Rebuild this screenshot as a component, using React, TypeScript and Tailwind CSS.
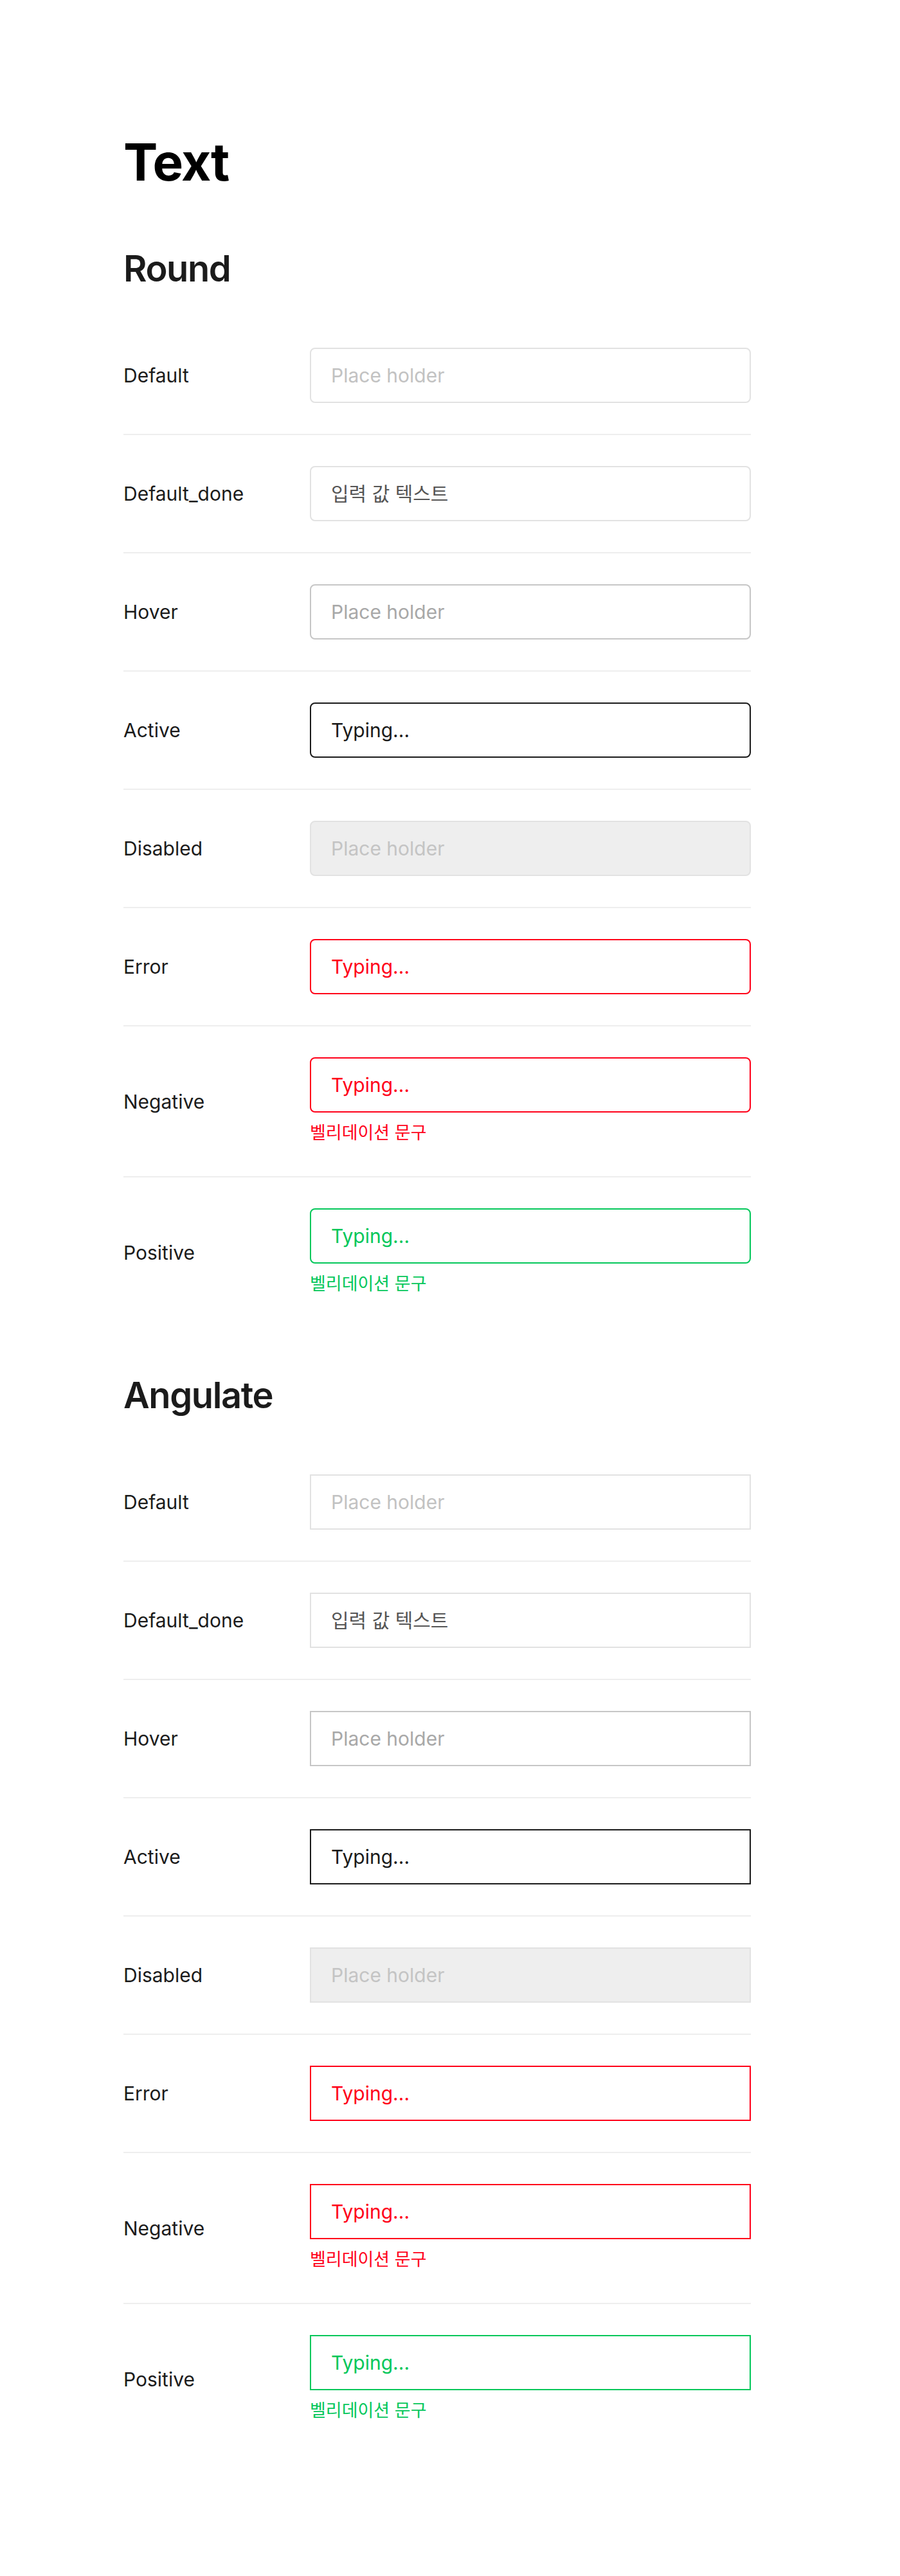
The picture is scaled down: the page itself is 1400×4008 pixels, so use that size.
const FONT = "font-['Inter','Noto_Sans_CJK_KR',sans-serif]"

type Variant =
  | 'default'
  | 'done'
  | 'hover'
  | 'active'
  | 'disabled'
  | 'error'
  | 'negative'
  | 'positive'

const ROWS: { label: string; variant: Variant }[] = [
  { label: 'Default', variant: 'default' },
  { label: 'Default_done', variant: 'done' },
  { label: 'Hover', variant: 'hover' },
  { label: 'Active', variant: 'active' },
  { label: 'Disabled', variant: 'disabled' },
  { label: 'Error', variant: 'error' },
  { label: 'Negative', variant: 'negative' },
  { label: 'Positive', variant: 'positive' },
]

const BOX: Record<Variant, string> = {
  default: 'border-[#e2e2e2] bg-white text-[#c2c2c2]',
  done: 'border-[#e2e2e2] bg-white text-[#555555]',
  hover: 'border-[#c6c6c6] bg-white text-[#a8a8a8]',
  active: 'border-[#1a1a1a] bg-white text-[#1a1a1a]',
  disabled: 'border-[#e2e2e2] bg-[#eeeeee] text-[#c4c4c4]',
  error: 'border-[#ff0019] bg-white text-[#ff0019]',
  negative: 'border-[#ff0019] bg-white text-[#ff0019]',
  positive: 'border-[#03c75a] bg-white text-[#03c75a]',
}

const TEXT: Record<Variant, string> = {
  default: 'Place holder',
  done: '입력 값 텍스트',
  hover: 'Place holder',
  active: 'Typing...',
  disabled: 'Place holder',
  error: 'Typing...',
  negative: 'Typing...',
  positive: 'Typing...',
}

function Field({ variant, round }: { variant: Variant; round: boolean }) {
  const hint =
    variant === 'negative'
      ? 'text-[#ff0019]'
      : variant === 'positive'
        ? 'text-[#03c75a]'
        : null

  return (
    <div className="flex-1">
      <div
        className={`flex h-[86px] items-center border-2 pl-[31px] text-[30px] leading-none ${
          round ? 'rounded-lg' : ''
        } ${BOX[variant]}`}
      >
        {TEXT[variant]}
      </div>
      {hint && (
        <p className={`mt-3 text-[27px] leading-[39px] ${hint}`}>
          벨리데이션 문구
        </p>
      )}
    </div>
  )
}

function Section({ title, round }: { title: string; round: boolean }) {
  return (
    <section>
      <h2 className="text-[56px] font-semibold leading-none tracking-[-0.025em] text-[#1b1b1b]">
        {title}
      </h2>

      <div className="mt-[47px]">
        {ROWS.map((row) => (
          <div
            key={row.label}
            className="flex items-center border-b-2 border-[#eeeeee] py-12 last:border-b-0"
          >
            <span className="w-[290px] shrink-0 text-[30px] leading-none text-[#1b1b1b]">
              {row.label}
            </span>
            <Field variant={row.variant} round={round} />
          </div>
        ))}
      </div>
    </section>
  )
}

export default function App() {
  return (
    <div className={`min-h-screen bg-white pt-[212px] pb-[194px] pl-[192px] ${FONT}`}>
      <div className="w-[976px]">
        <h1 className="text-[80px] font-bold leading-none tracking-[-0.02em] text-black">
          Text
        </h1>

        <div className="mt-[98px]">
          <Section title="Round" round />
        </div>

        <div className="mt-[78px]">
          <Section title="Angulate" round={false} />
        </div>
      </div>
    </div>
  )
}
